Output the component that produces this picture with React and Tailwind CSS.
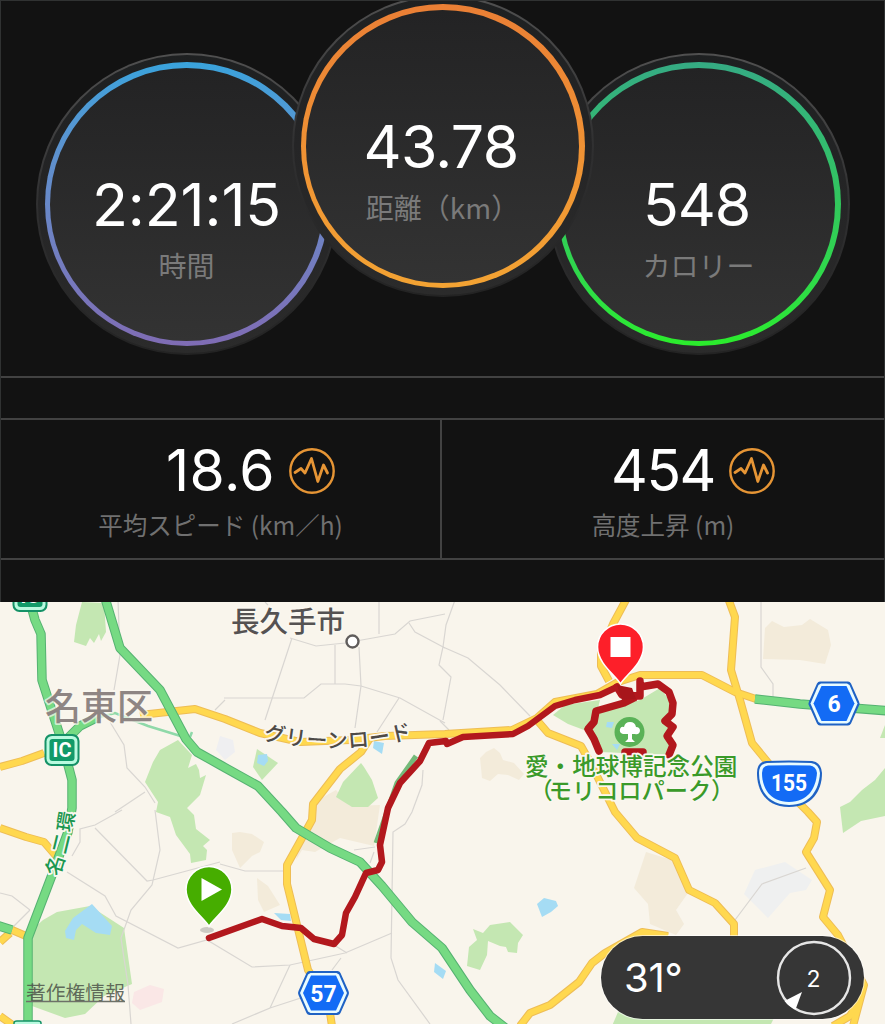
import React from 'react';
import clsx from 'clsx';

const dials = [
  {
    value: '2:21:15',
    label: '時間',
    ring: 'from-[#39a3dc] to-[#7f6cb4]',
    place: 'mt-[52px]',
    digits: 'tracking-[-0.1px]',
  },
  {
    value: '43.78',
    label: '距離（km）',
    ring: 'from-[#ea7f35] to-[#f3a333]',
    place: '-mt-[6px] -mx-[46px] z-10',
    digits: 'tracking-[-0.7px] mr-[3px]',
  },
  {
    value: '548',
    label: 'カロリー',
    ring: 'from-[#35ab83] via-[#32c75c] to-[#2bec2b]',
    place: 'mt-[52px]',
    digits: 'tracking-[-1.2px] mr-[4px]',
  },
];

const stats = [
  { value: '18.6', label: '平均スピード (km／h)', digits: 'tracking-[0.4px]' },
  { value: '454', label: '高度上昇 (m)', digits: 'tracking-[-1.5px]' },
];

const minorRoads = [
  'M118 600L120 655L114 690',
  'M110 722L124 745L127 768L145 787L155 803M145 792L115 812',
  'M225 700L215 710M224 698H304L321 684H345L361 686L400 698L445 723',
  'M292 638L265 720M265 602L268 605M290 638L316 646L345 643L395 634L410 621L445 614M335 645V684M359 647L361 686L355 728M399 698L377 732M379 602V634M409 623L415 632L445 648',
  'M455 600L446 625L443 647L439 665L451 677L443 720M443 647L468 658L500 685L530 716M440 721L449 730',
  'M761 600V667L773 684V697',
  'M72 856L80 842L80 829L95 825L122 810M95 828L147 881L153 880L220 862M155 810L160 850L152 885L131 910L121 938L128 985L131 1024M67 872L105 896L116 916L178 948L207 940L252 967L290 965L345 953L392 933',
  'M0 893L12 896L30 910M30 910L12 928M290 965L270 1008L232 1024M270 1008L310 995',
  'M423 770L422 785L412 812L405 824L393 832L391 958L398 980L430 1024M374 852L370 863M354 850L375 847M334 945L347 953M341 958L332 970',
  'M220 864L245 871H285M806 868L762 884L735 920',
];

const yellowRoads = [
  'M0 767L22 761L44 753',
  'M140 715L195 709L225 719L260 733L300 742L350 740L385 736L445 734L512 730L537 718L555 702L597 694L618 682L640 675H702L735 692L756 699',
  'M728 598L735 617L731 670L740 700L752 743L770 765L788 792L808 812L817 822L814 838L806 852L830 890L823 917L838 935L864 985L853 1026',
  'M627 598L613 624L601 652V666L609 681',
  'M536 719L548 733L581 746L590 762L602 786L615 812L637 838L675 858L689 890L715 903L734 924V940',
  'M370 738L361 752L340 769L313 804L312 820L287 865V884L308 970L328 1000L332 1026',
  'M668 936L642 932L605 953L592 963L579 982L550 1005L530 1013L520 1026',
  'M0 828L26 837L44 842L56 856',
  'M0 942L10 933M12 930L26 936M0 1016L14 1026M833 1026L850 1016L860 998',
];

const greenRoads = [
  'M29 598L35 620L41 634L42 680L51 708L62 742L72 780V808L68 832L52 875L28 938V1026',
  'M105 598L120 648L160 690L186 739L197 752L222 766L258 786L282 812L296 828L330 848L360 862L382 886L412 922L442 948L470 990L490 1016L508 1030',
  'M64 742L80 726L96 718',
  'M755 699L800 704L890 711',
  'M-4 925L12 930',
];

const parks = [
  'M82 602L76 625L74 642L86 646L90 638L94 643L99 634L101 641L106 632L104 603Z',
  'M178 740L160 750L153 762L145 782L158 802L156 812L170 817L176 835L190 854L191 863L206 860L207 850L203 846L210 840L196 829L194 815L187 808L200 795L206 775L200 778L199 770L196 764L188 768L192 755Z',
  'M257 749L278 763L262 780L253 767Z',
  'M361 763L343 782L336 797L352 807H368L378 798L372 780L364 767Z',
  'M553 715L565 705L600 700L592 733L568 724Z',
  'M596 712L640 700L660 688L673 705L668 755L600 752L590 730Z',
  'M885 768L875 780L862 790L850 802L840 807L843 833L861 821L885 816Z',
  'M885 725L880 738L885 738Z',
  'M43 920L57 912L90 906L124 928L132 984L104 996L85 1014L65 1018L32 1006V930Z',
  'M473 929L483 933L490 925L510 922L523 935L518 943L517 953L508 952L506 947L500 946L488 941L487 955L480 970L467 966L469 947L477 940Z',
  'M618 1012L612 1026H770L775 1016Z',
];

const water = [
  'M65 931L73 918L92 904L112 926L110 935L96 933L82 924L76 930L74 940L66 938Z',
  'M258 755L267 754L268 761L264 766L257 763Z',
  'M374 741L384 743L382 754L373 748Z',
  'M537 904L544 898L556 901L558 906L551 912L542 917Z',
  'M274 913L290 914L291 921L281 920Z',
  'M435 963L446 971L443 979L434 972Z',
  'M607 722L614 722L612 728L606 727ZM612 744L620 744L617 750Z',
];

const sands = [
  'M765 628L772 621L784 627L802 625L810 619L828 630L831 645L825 664L800 660L763 659Z',
  'M232 833L240 832L252 834L264 842L260 852L252 856L240 868L232 850Z',
  'M257 878L268 886L280 905L264 912L258 900Z',
  'M318 800L336 790L350 806L380 805L374 846L340 838L315 852L302 850L296 860L301 838L314 820Z',
  'M480 758L486 752L494 748L500 753L503 760L514 763L524 774L519 780L508 775L498 774L490 781L482 778Z',
  'M646 852L672 860L688 893L676 910L684 924L676 935L650 924L648 904L634 888Z',
];

const route =
  'M209 938L262 919L282 926L301 928L314 939L334 944L342 935L346 913L355 897L366 873L378 870L382 862L380 845L388 808L400 783L420 761L429 743L446 741L447 744L463 737L513 734L528 726L555 706L575 700L600 695L617 687';

const parkLoop =
  'M617 687L622 695L640 696V681V687L658 684L669 692L673 703L672 714L665 721L673 727L667 736L673 745L669 755M628 692L634 698L624 703L596 711L594 722L588 729L594 739L599 751M625 752H643';

const latin = "font-[Inter,'Liberation_Sans',sans-serif]";
const jp = "font-['Noto_Sans_CJK_JP',sans-serif]";

const Dial = ({ value, label, ring, place, digits }) => (
  <div className={clsx('relative size-[302px] shrink-0 rounded-full bg-linear-to-b from-[#505050] via-[#303031] to-[#232323] p-[2px]', place)}>
    <div className="size-full rounded-full bg-linear-to-b from-[#1e2021] via-[#252526] to-[#2b2b2b] p-[7px]">
      <div className={clsx('size-full rounded-full bg-linear-to-b p-[5.5px]', ring)}>
        <div className="flex size-full flex-col items-center rounded-full bg-linear-to-b from-[#232324] to-[#333333] pt-[107.5px]">
          <span className={clsx('text-[59px] leading-none text-white', latin, digits)}>{value}</span>
          <span className={clsx('mt-[17px] text-[28px] leading-none text-[#7a7a7a]', jp)}>{label}</span>
        </div>
      </div>
    </div>
  </div>
);

const GraphIcon = () => (
  <svg viewBox="0 0 46 46" className="size-[46px]" fill="none" stroke="#e69535" strokeLinejoin="round" strokeLinecap="round">
    <circle cx="23" cy="23" r="21.7" strokeWidth="2.4" />
    <path d="M6 24.500L12 20.500L16 25L22.500 10.500L28.800 33.500L34.500 17L38.500 25" strokeWidth="2.8" />
  </svg>
);

const Stat = ({ value, label, digits }) => (
  <div className="flex flex-col items-center border-r-2 border-[#424242] pt-[22px] last:border-r-0">
    <div className="flex items-center gap-[14px]">
      <span className="w-[46px]" />
      <span className={clsx('text-[57px] leading-[58px] text-white', latin, digits)}>{value}</span>
      <GraphIcon />
    </div>
    <span className={clsx('mt-[13px] text-[24.5px] leading-none text-[#707070]', jp)}>{label}</span>
  </div>
);

const HexShield = ({ x, y, label }) => (
  <g transform={`translate(${x} ${y})`}>
    <path d="M-14 -22H14Q16 -22 17 -20L25 -2Q26 0 25 2L17 20Q16 22 14 22H-14Q-16 22 -17 20L-25 2Q-26 0 -25 -2L-17 -20Q-16 -22 -14 -22Z" fill="#1f62c4" />
    <path d="M-13 -20H13L15.5 -18.5L23.5 0L15.5 18.5L13 20H-13L-15.5 18.5L-23.5 0L-15.5 -18.5Z" fill="#e8fbff" />
    <path d="M-12.5 -17.5H12.5L20.5 0L12.5 17.5H-12.5L-20.5 0Z" fill="#136bf5" />
    <text y="8.5" textAnchor="middle" fontSize="23" fontWeight="700" fill="#fff" fontFamily="Roboto, sans-serif">{label}</text>
  </g>
);

const InterchangeSign = ({ x, y }) => (
  <g transform={`translate(${x} ${y})`}>
    <rect x="-17.5" y="-16" width="35" height="32" rx="7" fill="#159267" />
    <rect x="-15.5" y="-14" width="31" height="28" rx="5.5" fill="#b9fadf" />
    <rect x="-12.5" y="-11" width="25" height="22" rx="3" fill="#129a69" />
    <text y="7.2" textAnchor="middle" fontSize="20" fontWeight="700" fill="#fff" fontFamily="Roboto, sans-serif">IC</text>
  </g>
);

const Pin = ({ x, y, color, children }) => (
  <g transform={`translate(${x} ${y})`}>
    <path d="M0 37C-4 29 -23 17 -23 0A23 23 0 0 1 23 0C23 17 4 29 0 37Z" fill={color} stroke="#fff" strokeWidth="1.6" />
    {children}
  </g>
);

const Roads = ({ paths, edge, fill, width }) => (
  <g fill="none" strokeLinejoin="round">
    {paths.map((d) => <path key={d} d={d} stroke={edge} strokeWidth={width + 2} />)}
    {paths.map((d) => <path key={d} d={d} stroke={fill} strokeWidth={width} />)}
  </g>
);

const RouteMap = () => (
  <svg viewBox="0 602 885 422" className="block h-[422px] w-[885px]" fontFamily="'Noto Sans CJK JP', sans-serif">
    <rect y="602" width="885" height="422" fill="#f9f5ec" />
    <g fill="#f3ebda">{sands.map((d) => <path key={d} d={d} />)}</g>
    <path d="M755 870L785 862L812 880L806 890L790 893L768 918L744 894Z" fill="#eff0f0" />
    <path d="M220 736L233 740L235 752L225 760L216 750Z" fill="#efeff1" />
    <path d="M134 992L150 985L164 989L162 1002L140 1010L132 1003Z" fill="#fae7e6" />
    <g fill="#c4e7b2">{parks.map((d) => <path key={d} d={d} />)}</g>
    <g fill="#a5dcf4">{water.map((d) => <path key={d} d={d} />)}</g>
    <g fill="none" stroke="#d9d6d2" strokeWidth="1.2">{minorRoads.map((d) => <path key={d} d={d} />)}</g>

    {/* Roads */}
    <path d="M96 718L115 713L148 726L187 738M190 737L192 732" fill="none" stroke="#8fd9a9" strokeWidth="2.5" />
    <Roads paths={yellowRoads} edge="#eebd55" fill="#ffd84f" width={6} />
    <path d="M416 756L397 783L389 806L376 843" fill="none" stroke="#74ba79" strokeWidth="5" />
    <Roads paths={greenRoads} edge="#56b272" fill="#76da83" width={7.5} />

    {/* Recorded track */}
    <g fill="none" stroke="#b2181d" strokeLinejoin="round" strokeLinecap="round">
      <path d={route} strokeWidth="6.5" />
      <path d={parkLoop} strokeWidth="7.5" />
    </g>
    <path d="M617 685L632 688L636 699L622 700Z" fill="#a7161b" />

    {/* Park marker */}
    <circle cx="629.5" cy="732" r="15" fill="#5ab257" />
    <path d="M628 734H623Q619 733 620 729Q621 726 624 727Q625 722 630 722Q635 722 636 727Q640 727 640 731Q639 735 635 734H632V739L635 742H625L628 739Z" fill="#fff" />

    {/* Place names */}
    <g stroke="#faf7ef" strokeWidth="3.5" strokeLinejoin="round" paintOrder="stroke">
      <text x="231" y="632" fontSize="28.5" fontWeight="500" fill="#555252">長久手市</text>
      <text x="45" y="719.5" fontSize="36" fontWeight="500" fill="#8e8583" strokeOpacity="0.7">名東区</text>
      <path id="greenRoad" d="M263 739Q340 758 415 737" fill="none" stroke="none" />
      <text fontSize="21" fontWeight="500" fill="#4e4a46">
        <textPath href="#greenRoad" textLength="151">グリーンロード</textPath>
      </text>
      <path id="meiNiKan" d="M59 877Q71 842 76 803" fill="none" stroke="none" />
      <text fontSize="20" fontWeight="500" fill="#1c9750">
        <textPath href="#meiNiKan" textLength="66">名二環</textPath>
      </text>
      <g fontWeight="500" fill="#3a9a29">
        <text x="525" y="774.5" fontSize="23.6">愛・地球博記念公園</text>
        <text x="525.6" y="798.5" dx="4 -4" fontSize="23.2">（モリコロパーク）</text>
      </g>
    </g>
    <circle cx="352.5" cy="641.5" r="6" fill="#fff" stroke="#605d5c" strokeWidth="2.4" />
    <text x="26" y="1000" fontSize="19.8" fill="#4d5349" fillOpacity="0.85">著作権情報</text>
    <path d="M26 1001.5H125" stroke="#6d7168" strokeWidth="1.4" />

    {/* Road signs */}
    <InterchangeSign x={62} y={750} />
    <InterchangeSign x={30} y={596} />
    <path d="M14 1026V1023Q14 1021 17 1021H38Q41 1021 41 1023V1026Z" fill="#b9fadf" stroke="#159267" strokeWidth="1.5" />
    <HexShield x={834} y={703.5} label="6" />
    <HexShield x={323.5} y={993} label="57" />
    <path d="M766 761Q789 760 812 761Q821 762 822 773C822 791 812 807 789 807C766 807 757 791 757 773Q757 762 766 761Z" fill="#1f62c4" />
    <path d="M767 763Q789 762 811 763Q819 764 820 773C819 790 810 805 789 805C768 805 759 790 759 773Q759 764 767 763Z" fill="#e8fbff" />
    <path d="M768 765.500Q789 765 810 765.500Q816 766 817 773C816 788 808 802 789 802C770 802 762 788 762 773Q762 766 768 765.500Z" fill="#136bf5" />
    <text x="789" y="790.5" textAnchor="middle" fontSize="24" fontWeight="700" fill="#fff" fontFamily="Roboto, sans-serif" textLength="36" lengthAdjust="spacingAndGlyphs">155</text>

    {/* Start and finish */}
    <ellipse cx="207" cy="930" rx="7" ry="3" fill="#8a8a86" opacity="0.4" />
    <Pin x={209} y={889.5} color="#46ad00">
      <path d="M-7.500 -11.500L13 0L-7.500 11.500Z" fill="#fff" />
    </Pin>
    <Pin x={620.5} y={647} color="#fd1f29">
      <rect x="-10" y="-10" width="20" height="20" fill="#fff" />
    </Pin>
  </svg>
);

const Weather = () => (
  <div className={clsx('absolute bottom-[5px] right-[21px] flex h-[83px] w-[263px] items-center justify-between rounded-full bg-[#363636] pl-[23px] pr-[12px] text-white ring-1 ring-white/60', latin)}>
    <span className="text-[40px] leading-none tracking-[-0.2px]">31°</span>
    <svg viewBox="0 0 76 76" className="size-[76px]">
      <circle cx="38" cy="38" r="36" fill="none" stroke="#e6e6e6" strokeWidth="2.4" />
      <path d="M26 52L8.500 61Q13 67 19.500 69.500Z" fill="#fff" />
      <text x="37.500" y="46.500" textAnchor="middle" fontSize="23" fill="#fff">2</text>
    </svg>
  </div>
);

const App = () => {
  return (
    <div className="h-[1024px] w-[885px] overflow-hidden bg-[#121212]">
      <div className="h-[602px] border-x border-t border-[#303232]">
        {/* Summary dials */}
        <div className="flex h-[377px] items-start justify-center overflow-hidden border-b-2 border-[#424242]">
          {dials.map((dial) => <Dial key={dial.label} {...dial} />)}
        </div>

        {/* Stats */}
        <div className="mt-[40px] grid h-[142px] grid-cols-[441px_1fr] border-y-2 border-[#424242]">
          {stats.map((stat) => <Stat key={stat.label} {...stat} />)}
        </div>
      </div>

      {/* Map */}
      <div className="relative">
        <RouteMap />
        <Weather />
      </div>
    </div>
  );
};

export default App;
